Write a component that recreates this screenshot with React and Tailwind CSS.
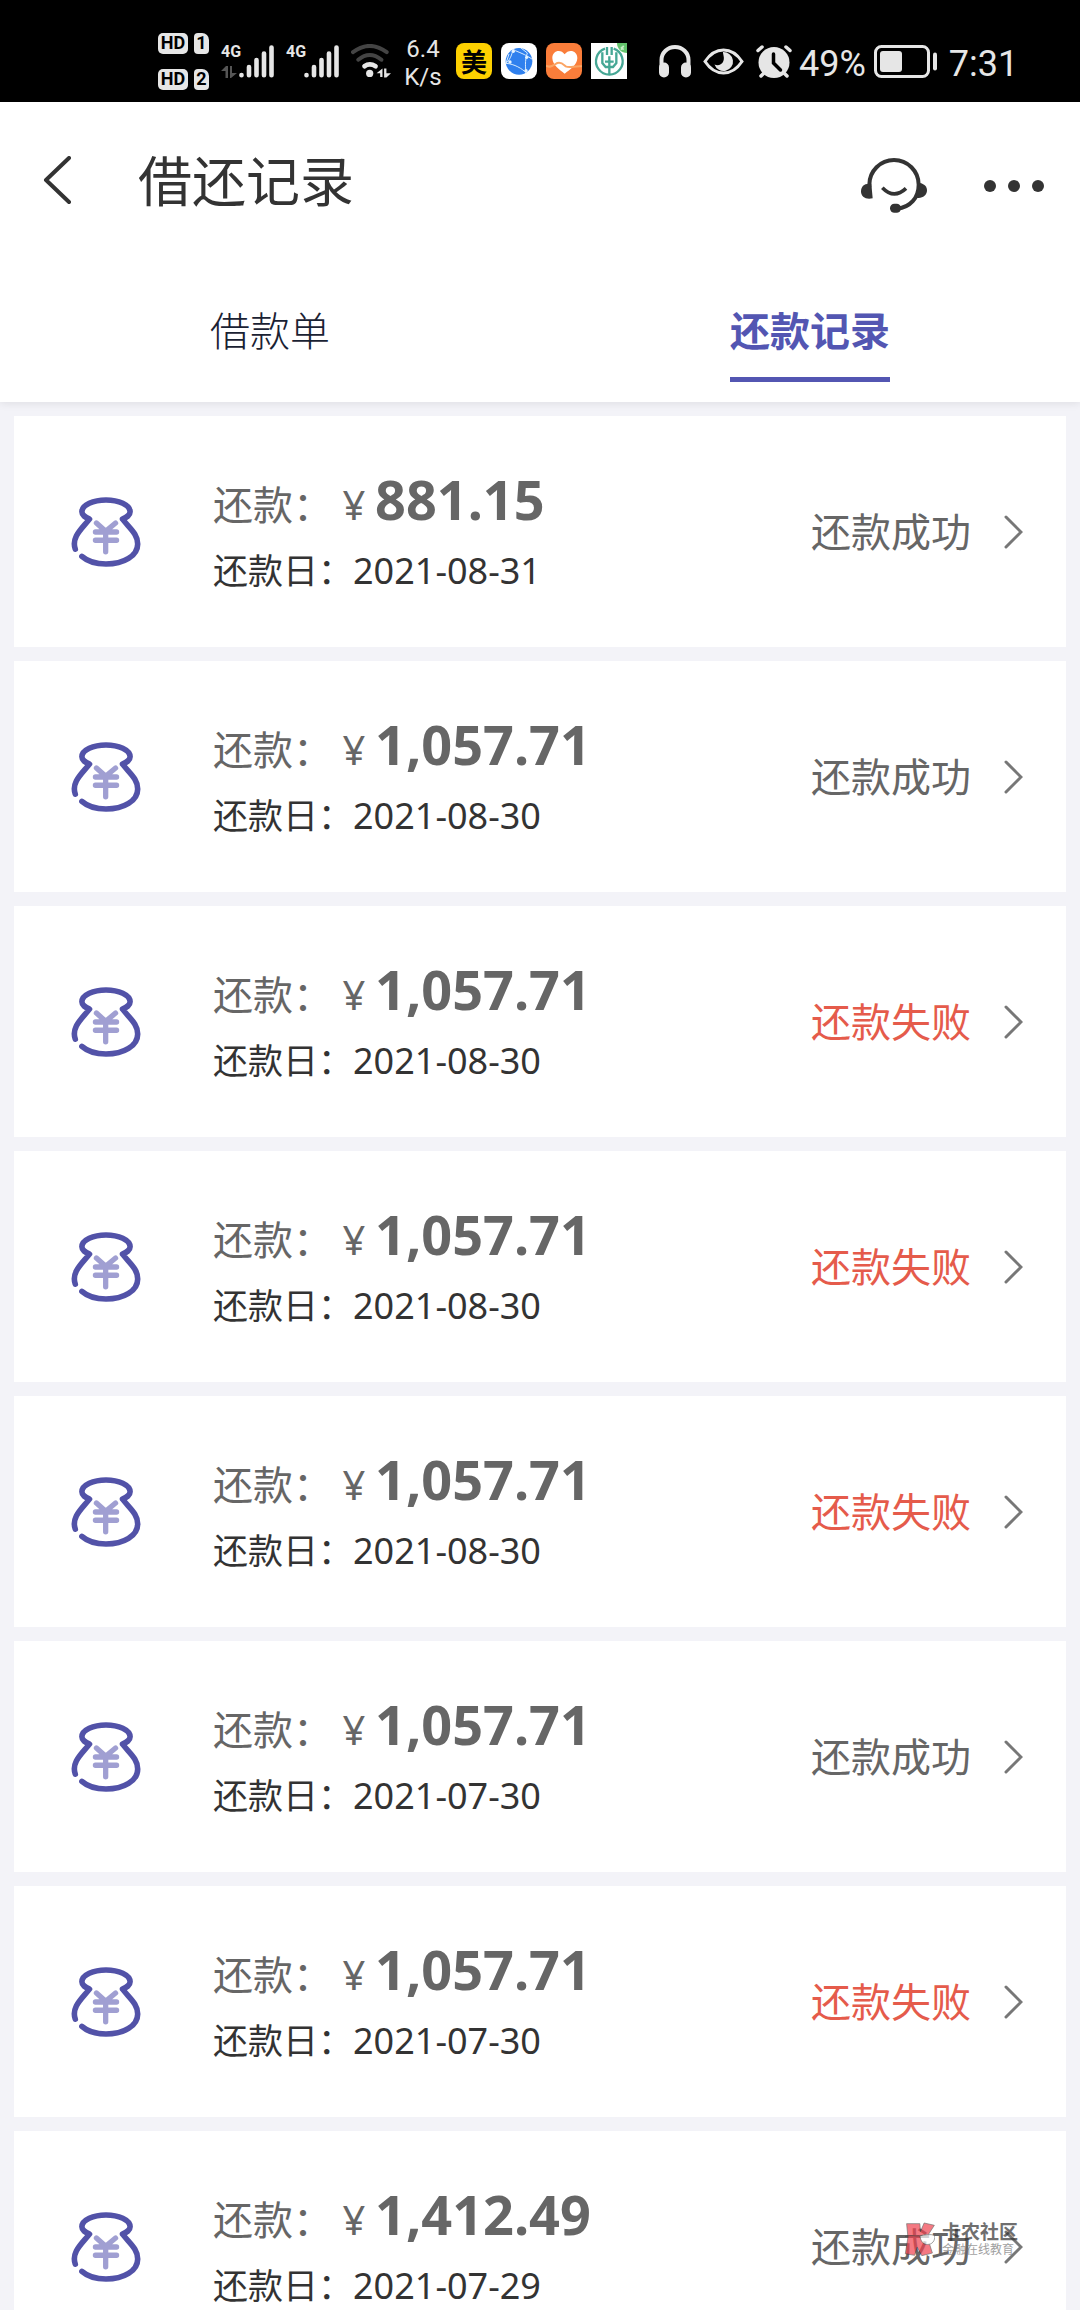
import { useState } from "react";
import clsx from "clsx";

const tabs = ["借款单", "还款记录"];

const records = [
  { id: 1, amount: "881.15", date: "2021-08-31", ok: true },
  { id: 2, amount: "1,057.71", date: "2021-08-30", ok: true },
  { id: 3, amount: "1,057.71", date: "2021-08-30", ok: false },
  { id: 4, amount: "1,057.71", date: "2021-08-30", ok: false },
  { id: 5, amount: "1,057.71", date: "2021-08-30", ok: false },
  { id: 6, amount: "1,057.71", date: "2021-07-30", ok: true },
  { id: 7, amount: "1,057.71", date: "2021-07-30", ok: false },
  { id: 8, amount: "1,412.49", date: "2021-07-29", ok: true }
];

function HdBadge({ sim }) {
  return (
    <div className="flex items-center gap-[6px] text-black">
      <span className="flex h-[21px] w-[30px] items-center justify-center rounded-[5px] bg-[#e6e6e6] text-[18px] leading-none font-bold">
        HD
      </span>
      <span className="flex h-[21px] w-[15px] items-center justify-center rounded-[4px] rounded-tr-[7px] bg-[#e6e6e6] text-[18px] leading-none font-bold">
        {sim}
      </span>
    </div>
  );
}

function Signal({ data }) {
  return (
    <div className="flex h-[34px] w-[53px] items-stretch">
      <div className="flex w-[18px] flex-col justify-between">
        <span className="text-[16px] leading-[16px] font-bold">4G</span>
        {data && (
          <svg viewBox="0 0 16 12" className="h-[12px] w-[16px]" fill="#555">
            <path d="M5 0h2v12H4.500V5H0zM9 0h2v7h5l-6 5H9z" />
          </svg>
        )}
      </div>
      <svg viewBox="0 0 35 34" className="h-[34px] w-[35px]" stroke="#e6e6e6" strokeWidth="4.600" strokeLinecap="round">
        <path d="M2.500 31v0.200M10 23v8.200M17.500 16v15.200M25 9.500v21.700M32.500 3.500v27.700" />
      </svg>
    </div>
  );
}

function Wifi() {
  return (
    <svg viewBox="628 74 122 102" className="h-[34px] w-[40px]" fill="none" strokeLinecap="round">
      <path d="M634 98Q685 60 737 98" stroke="#444" strokeWidth="12" />
      <path d="M650 121Q685 92 721 121" stroke="#444" strokeWidth="12" />
      <path d="M669 141Q685 130 703 141" stroke="#e6e6e6" strokeWidth="14" />
      <circle cx="685" cy="163" r="11" fill="#e6e6e6" />
      <path d="M724 148v26h-7v-12h-11zM729 148h7v14h14l-14 13h-7z" fill="#e6e6e6" />
    </svg>
  );
}

function AppIcons() {
  return (
    <div className="flex items-center gap-[9px]">
      <span className="flex size-[36px] items-center justify-center rounded-[8px] bg-[#fdd000] font-['Noto_Sans_CJK_SC',sans-serif] text-[26px] leading-none font-bold text-black">
        美
      </span>
      <svg viewBox="0 0 108 108" className="size-[36px]" fill="none">
        <rect width="108" height="108" rx="24" fill="#fff" />
        <circle cx="54" cy="55" r="40" fill="#2f80ee" />
        <g stroke="#d8ecff" strokeWidth="3">
          <path d="M36 18C32 40 25 52 15 61M36 18l7 5C62 31 78 37 94 49M15 61C40 63 64 77 76 90M79 30C71 52 73 78 76 90M24 33L15 61M60 15l19 15" />
        </g>
        <g fill="#e6f4ff">
          <circle cx="37" cy="25" r="5" />
          <circle cx="27" cy="57" r="5" />
          <circle cx="77" cy="43" r="5" />
          <circle cx="75" cy="83" r="5" />
        </g>
      </svg>
      <svg viewBox="0 0 108 108" className="size-[36px]" fill="none">
        <rect width="108" height="108" rx="24" fill="#fa7d3a" />
        <path d="M56 34C44 16 18 23 19 46c1 20 21 34 37 46 16-12 37-26 38-46 1-23-26-30-38-12z" fill="#fff" />
        <path d="M0 68c14 8 22-2 34-8 12-4 18 4 25 10 12 6 26-2 49 0" stroke="#fba564" strokeWidth="6" />
      </svg>
      <svg viewBox="0 0 108 108" className="size-[36px]" fill="none">
        <rect width="108" height="108" fill="#fff" />
        <path d="M78 0h30v30C92 30 78 18 78 0z" fill="#64c36d" />
        <path d="M90 12l8 8M98 8l-8 12" stroke="#c8efc8" strokeWidth="5" />
        <g stroke="#46a795" strokeWidth="7">
          <path d="M42 17a40 40 0 1 0 26 0" />
          <path d="M48 12v24M62 12v24M34 28v32l10 12h22l10-12V28M55 40v54M42 56h26" />
        </g>
      </svg>
    </div>
  );
}

function StatusBar() {
  return (
    <div className="flex h-[102px] shrink-0 items-center bg-black pt-[22px] pb-[2px] pl-[158px] text-[#e6e6e6]">
      <div className="flex flex-col gap-[15px]">
        <HdBadge sim="1" />
        <HdBadge sim="2" />
      </div>
      <div className="ml-3 flex items-center gap-3">
        <Signal data />
        <Signal />
        <Wifi />
      </div>
      <div className="ml-3 w-[40px] pt-1 text-center text-[24px] leading-[28px]">
        6.4 K/s
      </div>
      <div className="ml-[13px]">
        <AppIcons />
      </div>
      <div className="ml-8 flex items-center gap-3">
        <svg viewBox="0 0 32 33" className="h-[33px] w-[32px]" fill="none" stroke="#e6e6e6">
          <path d="M2.500 22V15a13.500 13 0 0 1 27 0v7" strokeWidth="4" />
          <rect x="2.500" y="20" width="5" height="10" rx="2.500" strokeWidth="5" />
          <rect x="24.500" y="20" width="5" height="10" rx="2.500" strokeWidth="5" />
        </svg>
        <svg viewBox="0 0 41 27" className="h-[27px] w-[41px]" fill="none">
          <path d="M2 13.500C7 6 13 2 20.500 2S34 6 39 13.500C34 21 28 25 20.500 25S7 21 2 13.500z" stroke="#e6e6e6" strokeWidth="3" />
          <path d="M20 4a9.500 9.500 0 1 1-8.500 12.500c3 1.500 7 .5 8.500-2.500 2-4 0-7 0-10z" fill="#e6e6e6" />
        </svg>
        <svg viewBox="0 0 36 33" className="h-[33px] w-[36px]" fill="none" strokeLinecap="round">
          <circle cx="18" cy="17.500" r="15.500" fill="#e6e6e6" />
          <path d="M5.500 1L0 6.500M30.500 1L36 6.500" stroke="#000" strokeWidth="8" strokeLinecap="butt" />
          <path d="M2 5.500L6 2M34 5.500L30 2M5 31l3-3M31 31l-3-3" stroke="#e6e6e6" strokeWidth="3.500" />
          <path d="M17.500 9v9l7 7" stroke="#000" strokeWidth="3.500" />
        </svg>
      </div>
      <span className="ml-[7px] pt-[6px] text-[36px] leading-none">49%</span>
      <svg viewBox="0 0 63 33" className="ml-2 h-[33px] w-[63px]" fill="none">
        <rect x="1.500" y="1.500" width="53" height="30" rx="6" stroke="#e6e6e6" strokeWidth="3" />
        <rect x="6" y="6" width="22" height="21" rx="3" fill="#e6e6e6" />
        <path d="M61 9.500v14" stroke="#e6e6e6" strokeWidth="4" strokeLinecap="round" />
      </svg>
      <span className="ml-3 pt-[6px] text-[36px] leading-none">7:31</span>
    </div>
  );
}

function MoneyBag() {
  return (
    <svg viewBox="64 50 212 212" className="size-[70px] shrink-0" fill="none" strokeLinecap="round" strokeLinejoin="round">
      <path
        d="M77 208C64 172 97 146 120 117C108 111 97 106 97 95C97 74 132 59 170 59S243 74 243 95C243 106 232 111 220 117C243 146 266 162 266 192C266 228 224 253 170 253C140 253 114 245 97 230"
        stroke="#5252a8"
        strokeWidth="17"
      />
      <path d="M141 129l28 25 30-25M169 154v62M138 156h64M138 181h64" stroke="#a09fd2" strokeWidth="16" />
    </svg>
  );
}

function RecordCard({ record }) {
  return (
    <li>
      <button className="flex h-[231px] w-full items-center bg-white pr-[43px] pl-[57px] text-left">
        <MoneyBag />
        <div className="ml-[72px] flex-1 pt-2">
          <div className="flex items-baseline text-[40px] leading-[64px] text-[#666]">
            <span>还款：</span>
            <span className="w-[42px] text-center font-['Noto_Sans',sans-serif]">¥</span>
            <span className="font-['Noto_Sans',sans-serif] text-[54px] font-bold">{record.amount}</span>
          </div>
          <div className="flex items-baseline text-[35px] leading-[64px] text-[#333]">
            <span>还款日：</span>
            <time className="font-['Noto_Sans',sans-serif] text-[36px]">{record.date}</time>
          </div>
        </div>
        <span className={clsx("pt-[5px] text-[40px] leading-[56px]", record.ok ? "text-[#666]" : "text-[#e55b4b]")}>
          {record.ok ? "还款成功" : "还款失败"}
        </span>
        <svg viewBox="0 0 20 36" className="ml-8 h-[36px] w-[20px]" fill="none" stroke="#777" strokeWidth="3" strokeLinecap="round">
          <path d="M3 3l15 15L3 33" />
        </svg>
      </button>
    </li>
  );
}

function Watermark() {
  return (
    <div className="pointer-events-none absolute right-[62px] bottom-[53px] flex items-center gap-[7px] opacity-70">
      <svg viewBox="128 306 92 106" className="h-[35px] w-[31px]" fill="#f0414e" stroke="#333" strokeWidth="2">
        <path d="M135 311h40l2 24 11-26 31 7-22 34 16 50-32 8-14-26-8 25-28-5 8-50z" />
        <path d="M130 350c20-6 30 0 44-2" fill="none" />
        <path d="M175 348c14-5 32-5 45-2 2 18-8 28-22 28s-20-10-23-26z" fill="#fff" />
      </svg>
      <div className="flex flex-col">
        <span className="text-[19px] leading-[20px] font-bold text-[#333]">卡农社区</span>
        <span className="text-[12px] leading-[14px] text-[#777]">金融在线教育</span>
      </div>
    </div>
  );
}

export default function App() {
  const [activeTab, setActiveTab] = useState("还款记录");

  return (
    <div className="relative flex h-screen flex-col overflow-hidden bg-[#f3f3f8] font-[Roboto,'Noto_Sans_CJK_SC',sans-serif]">
      <StatusBar />

      <div className="z-10 shrink-0 bg-white shadow-[0_2px_8px_rgba(0,0,0,0.08)]">
        <header className="flex h-[160px] items-center pt-1 pr-[36px] pl-[42px] text-[#333]">
          <button aria-label="返回">
            <svg viewBox="0 0 30 56" className="h-[56px] w-[30px]" fill="none" stroke="currentColor" strokeWidth="4" strokeLinecap="round" strokeLinejoin="round">
              <path d="M27 2L4 24l23 22" />
            </svg>
          </button>
          <h1 className="ml-[66px] flex-1 text-[54px] leading-[64px]">借还记录</h1>
          <button aria-label="客服">
            <svg viewBox="540 132 204 180" className="h-[60px] w-[68px]" fill="none" stroke="currentColor">
              <path d="M568 232V224a74 74 0 0 1 148 0c0 40-26 68-64 72" strokeWidth="12" />
              <path d="M607 233q35 36 71 2" strokeWidth="11" />
              <g fill="currentColor" stroke="none">
                <path d="M566 221h8l4 44c-20 5-35-4-35-21 0-14 9-23 23-23z" />
                <path d="M719 219c14 2 22 11 22 22 0 16-16 26-32 22z" />
                <rect x="630" y="281" width="33" height="27" rx="13" />
              </g>
            </svg>
          </button>
          <button aria-label="更多" className="ml-[56px]">
            <svg viewBox="0 0 60 20" className="h-[20px] w-[60px]" fill="currentColor">
              <circle cx="6" cy="12" r="6" />
              <circle cx="30" cy="12" r="6" />
              <circle cx="54" cy="12" r="6" />
            </svg>
          </button>
        </header>

        <nav className="grid h-[140px] grid-cols-2 items-end justify-items-center pb-[20px]">
          {tabs.map((tab) => (
            <button
              key={tab}
              onClick={() => setActiveTab(tab)}
              className={clsx(
                "border-b-[5px] pb-[16px] text-[40px] leading-[56px]",
                activeTab === tab
                  ? "border-[#5356b2] font-bold text-[#5356b2]"
                  : "border-transparent font-light text-[#1a2233]"
              )}
            >
              {tab}
            </button>
          ))}
        </nav>
      </div>

      <ul className="flex flex-1 flex-col gap-[14px] overflow-y-auto p-[14px] [scrollbar-width:none]">
        {records.map((record) => (
          <RecordCard key={record.id} record={record} />
        ))}
      </ul>

      <Watermark />
    </div>
  );
}
